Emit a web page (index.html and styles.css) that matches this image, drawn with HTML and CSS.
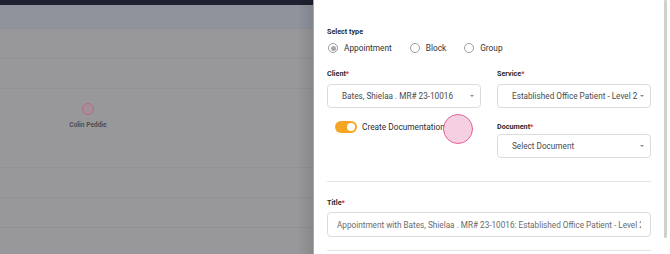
FILE: index.html
```html
<!DOCTYPE html>
<html>
<head>
<meta charset="utf-8">
<link rel="stylesheet" href="styles.css">
</head>
<body>
<div class="page">
  <div class="backdrop">
    <div class="topbar"></div>
    <div class="band"></div>
    <div class="row"></div>
    <div class="row"></div>
    <div class="row tall">
      <div class="person">
        <span class="dot"></span>
        <span class="pname">Colin Peddie</span>
      </div>
    </div>
    <div class="row"></div>
    <div class="row"></div>
    <div class="row last"></div>
    <div class="shade"></div>
  </div>
  <div class="panel">
    <div class="content">
      <div class="label">Select type</div>
      <div class="radios">
        <label class="radio"><span class="circle checked"></span>Appointment</label>
        <label class="radio"><span class="circle"></span>Block</label>
        <label class="radio"><span class="circle"></span>Group</label>
      </div>
      <div class="grid">
        <div class="field">
          <div class="label">Client<span class="req">*</span></div>
          <div class="select"><span class="val">Bates, Shielaa . MR# 23-10016</span><span class="caret"></span></div>
        </div>
        <div class="field">
          <div class="label">Service<span class="req">*</span></div>
          <div class="select"><span class="val">Established Office Patient - Level 2</span><span class="caret"></span></div>
        </div>
        <div class="field toggle-field">
          <div class="toggle-row">
            <span class="toggle"><span class="knob"></span></span>
            <span class="toggle-text">Create Documentation</span>
            <span class="click"></span>
          </div>
        </div>
        <div class="field doc">
          <div class="label">Document<span class="req">*</span></div>
          <div class="select"><span class="val">Select Document</span><span class="caret"></span></div>
        </div>
      </div>
      <hr class="divider">
      <div class="label title-label">Title<span class="req">*</span></div>
      <div class="input"><span class="ival">Appointment with Bates, Shielaa . MR# 23-10016: Established Office Patient - Level 2</span></div>
      <hr class="divider bottom">
    </div>
    <div class="scrollbar"></div>
  </div>
</div>
</body>
</html>
```

FILE: styles.css
```css
* { box-sizing: border-box; }
html, body { margin: 0; padding: 0; }
body {
  font-family: Roboto, "Noto Sans", "Liberation Sans", sans-serif;
  width: 670px;
  height: 254px;
  overflow: hidden;
  background: #fff;
}
.page {
  display: flex;
  width: 670px;
  height: 254px;
}
.backdrop {
  position: relative;
  width: 314px;
  flex: none;
  background: #98989b;
  display: flex;
  flex-direction: column;
  border-right: 1px solid #a8a8ab;
}
.topbar {
  height: 5px;
  background: #1d2130;
}
.band {
  height: 24px;
  background: #8f939c;
  border-bottom: 1px solid #929296;
}
.row {
  height: 30px;
  border-bottom: 1px solid #929296;
}
.row.tall {
  height: 79px;
  position: relative;
}
.row.last { border-bottom: none; flex: 1; }
.person {
  position: absolute;
  left: 66px;
  top: 14px;
  width: 44px;
  display: flex;
  flex-direction: column;
  align-items: center;
  gap: 6px;
}
.dot {
  width: 12px;
  height: 12px;
  border-radius: 50%;
  background: #a48f99;
  border: 1.5px solid #b56a8a;
}
.pname {
  font-size: 6.6px;
  font-weight: 700;
  color: #4d4d52;
  white-space: nowrap;
}
.shade {
  position: absolute;
  top: 0;
  right: 0;
  width: 16px;
  height: 100%;
  background: linear-gradient(to right, rgba(0,0,0,0), rgba(0,0,0,0.1));
}
.panel {
  position: relative;
  width: 356px;
  min-width: 0;
  flex: none;
  background: #fff;
  overflow: hidden;
}
.content {
  padding: 27px 19px 0 13px;
}
.label {
  font-size: 7.2px;
  font-weight: 700;
  color: #2b2b2b;
  height: 10px;
  line-height: 10px;
}
.req { color: #e0303a; }
.radios {
  display: flex;
  gap: 17px;
  margin-top: 5px;
  height: 12px;
  align-items: center;
}
.radio {
  display: flex;
  align-items: center;
  gap: 6px;
  font-size: 8.3px;
  color: #333;
}
.circle {
  width: 10px;
  height: 10px;
  border-radius: 50%;
  border: 1px solid #9c9c9c;
  display: flex;
  align-items: center;
  justify-content: center;
  margin-left: 1px;
}
.circle.checked::after {
  content: "";
  width: 5px;
  height: 5px;
  border-radius: 50%;
  background: #a8a8a8;
}
.grid {
  display: grid;
  grid-template-columns: 154px 154px;
  column-gap: 16px;
  margin-top: 15px;
}
.field { min-width: 0; }
.field .label { margin-bottom: 5px; }
.select {
  height: 24px;
  border: 1px solid #dcdcdc;
  border-radius: 4px;
  display: flex;
  align-items: center;
  padding: 0 6px 0 14px;
  font-size: 8.2px;
  color: #4a4a4a;
  min-width: 0;
}
.val {
  flex: 1;
  min-width: 0;
  white-space: nowrap;
  overflow: hidden;
}
.caret {
  flex: none;
  width: 0;
  height: 0;
  border-left: 2.5px solid transparent;
  border-right: 2.5px solid transparent;
  border-top: 2.5px solid #888;
  margin-left: 2px;
}
.toggle-field {
  padding-top: 13px;
}
.doc { margin-top: 14px; }
.doc .label { margin-bottom: 2px; }
.toggle-row {
  position: relative;
  display: flex;
  align-items: center;
  gap: 5px;
  padding-left: 8px;
  height: 12px;
}
.toggle {
  flex: none;
  width: 22px;
  height: 12px;
  border-radius: 6px;
  background: #f5a521;
  display: flex;
  align-items: center;
  justify-content: flex-end;
  padding-right: 2px;
}
.knob {
  width: 8px;
  height: 8px;
  border-radius: 50%;
  background: #fff;
}
.toggle-text {
  font-size: 8.3px;
  color: #2e2e2e;
  white-space: nowrap;
}
.click {
  position: absolute;
  left: 116px;
  top: -7px;
  width: 30px;
  height: 30px;
  border-radius: 50%;
  background: #f4d0e1;
  border: 1.5px solid #e0629b;
}
.divider {
  border: none;
  border-top: 1px solid #e3e3e3;
  margin: 23px 0 0 0;
  height: 0;
}
.title-label { margin-top: 16px; margin-bottom: 4px; }
.input {
  height: 25px;
  border: 1px solid #dcdcdc;
  border-radius: 4px;
  display: flex;
  align-items: center;
  padding: 0 9px;
  font-size: 8.2px;
  color: #6a6a6a;
  overflow: hidden;
  white-space: nowrap;
  min-width: 0;
}
.ival { overflow: hidden; min-width: 0; }
.divider.bottom { margin-top: 13px; }
.scrollbar {
  position: absolute;
  top: 0;
  right: 3px;
  width: 3px;
  height: 238px;
  background: #d0d0d0;
  border-radius: 1px;
}
```
